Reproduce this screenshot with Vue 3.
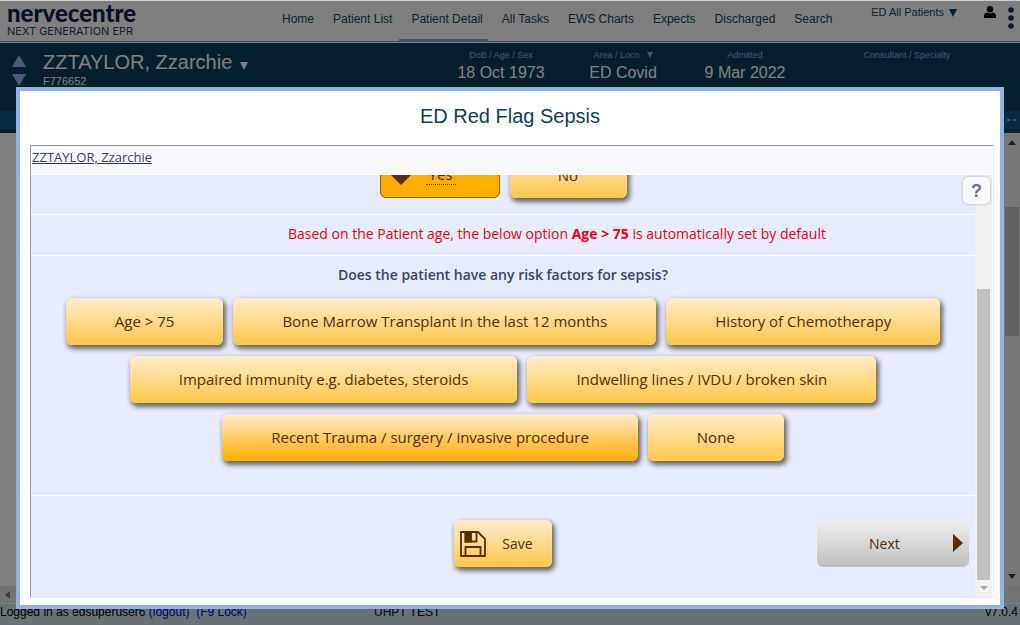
<script setup>
import { ref } from 'vue'

const navItems = ['Home', 'Patient List', 'Patient Detail', 'All Tasks', 'EWS Charts', 'Expects', 'Discharged', 'Search']
const current = 'Patient Detail'

const facts = [
  { label: 'DoB / Age / Sex', value: '18 Oct 1973' },
  { label: 'Area / Locn', value: 'ED Covid', menu: true },
  { label: 'Admitted', value: '9 Mar 2022' },
  { label: 'Consultant / Specialty', value: '' }
]

const riskRows = [
  ['Age > 75', 'Bone Marrow Transplant in the last 12 months', 'History of Chemotherapy'],
  ['Impaired immunity e.g. diabetes, steroids', 'Indwelling lines / IVDU / broken skin'],
  ['Recent Trauma / surgery / invasive procedure', 'None']
]
const highlighted = ref('Recent Trauma / surgery / invasive procedure')
</script>

<template>
  <div class="page">
    <header class="topbar">
      <div class="logo">
        <span class="logo-name">nervecentre</span>
        <span class="logo-tag">NEXT GENERATION EPR</span>
      </div>
      <nav class="nav">
        <a v-for="item in navItems" :key="item" href="#" :class="{ active: item === current }">{{ item }}</a>
      </nav>
      <div class="tools">
        <button class="list-picker" type="button">
          ED All Patients
          <svg width="8" height="8" viewBox="0 0 8 8"><path d="M0 0h8L4 8z" /></svg>
        </button>
        <button class="icon-btn user" type="button" aria-label="User">
          <svg width="12" height="12" viewBox="0 0 12 12"><circle cx="6" cy="3.2" r="3.2" /><path d="M0 12V9.8C0 7.8 1.6 6.8 3.2 6.6 4.8 7.9 7.2 7.9 8.8 6.6 10.4 6.8 12 7.8 12 9.8V12z" /></svg>
        </button>
        <button class="icon-btn dots" type="button" aria-label="More">
          <svg width="6" height="22" viewBox="0 0 6 22"><circle cx="3" cy="3" r="2.8" /><circle cx="3" cy="11" r="2.8" /><circle cx="3" cy="19" r="2.8" /></svg>
        </button>
      </div>
    </header>

    <section class="banner">
      <div class="stepper">
        <button type="button" aria-label="Previous patient"><svg width="14" height="12" viewBox="0 0 14 12"><path d="M7 0l7 12H0z" /></svg></button>
        <button type="button" aria-label="Next patient"><svg width="14" height="12" viewBox="0 0 14 12"><path d="M0 0h14L7 12z" /></svg></button>
      </div>
      <div class="who">
        <div class="name">ZZTAYLOR, Zzarchie <svg width="8" height="8" viewBox="0 0 8 8"><path d="M0 0h8L4 8z" /></svg></div>
        <div class="number">F776652</div>
      </div>
      <div v-for="fact in facts" :key="fact.label" class="fact">
        <div class="fact-label">{{ fact.label }} <svg v-if="fact.menu" width="6" height="6" viewBox="0 0 6 6"><path d="M0 0h6L3 6z" /></svg></div>
        <div class="fact-value">{{ fact.value }}</div>
      </div>
    </section>
    <div class="strip"><i></i><i></i></div>

    <main class="workspace">
      <div class="canvas"></div>
      <div class="page-scroll">
        <svg width="8" height="5" viewBox="0 0 8 5"><path d="M0 5l4-5 4 5z" /></svg>
        <div class="page-thumb"></div>
        <svg width="8" height="5" viewBox="0 0 8 5"><path d="M0 0h8L4 5z" /></svg>
      </div>
    </main>
    <div class="h-scroll"><svg width="5" height="8" viewBox="0 0 5 8"><path d="M5 0v8L0 4z" /></svg></div>
    <footer class="footer">
      <span class="login">Logged in as edsuperuser6 <a href="#">(logout)</a>&nbsp; <a href="#">(F9 Lock)</a></span>
      <span class="site">UHPT TEST</span>
      <span class="version">v7.0.4</span>
    </footer>

    <div class="shade"></div>

    <div class="dialog" role="dialog" aria-labelledby="dialog-title">
      <h1 id="dialog-title">ED Red Flag Sepsis</h1>
      <div class="frame">
        <div class="frame-head"><a href="#">ZZTAYLOR, Zzarchie</a></div>
        <div class="frame-body">
          <form class="form" @submit.prevent>
            <div class="row answers">
              <button class="choice chosen" type="button">
                <svg width="20" height="20" viewBox="0 0 20 20"><path d="M0 10L10 0l10 10-10 10z" /></svg>
                <span>Yes</span>
              </button>
              <button class="choice no" type="button">No</button>
            </div>
            <p class="notice">Based on the Patient age, the below option <b>Age &gt; 75</b> is automatically set by default</p>
            <fieldset class="risks">
              <legend>Does the patient have any risk factors for sepsis?</legend>
              <div v-for="(row, i) in riskRows" :key="i" class="row">
                <button v-for="label in row" :key="label" type="button" class="choice" :class="{ strong: label === highlighted }" @click="highlighted = label">{{ label }}</button>
              </div>
            </fieldset>
            <div class="actions">
              <button class="choice save" type="submit">
                <svg width="26" height="26" viewBox="0 0 26 26" fill="none" stroke="#572c07" stroke-width="1.8">
                  <path d="M1 1h17l7 7v17H1z" />
                  <path d="M5.5 25v-9h15v9" />
                  <path d="M5.5 1v9.5h11V1" />
                  <path d="M5.5 1h5.5v9.5H5.5z" fill="#572c07" />
                </svg>
                Save
              </button>
              <button class="next" type="button">
                <span>Next</span>
                <svg width="10" height="18" viewBox="0 0 10 18"><path d="M0 0l10 9-10 9z" fill="#572c07" /></svg>
              </button>
            </div>
          </form>
          <div class="form-scroll">
            <div class="form-thumb"></div>
            <svg width="8" height="4" viewBox="0 0 8 4"><path d="M0 0h8L4 4z" fill="#a3a3a3" /></svg>
          </div>
          <button class="help" type="button" aria-label="Help">?</button>
        </div>
      </div>
    </div>
  </div>
</template>

<style>
html, body, #app { height: 100%; }
body { background: #fff; overflow: hidden; }
</style>

<style scoped>
* { box-sizing: border-box; }
.page {
  position: relative;
  display: flex;
  flex-direction: column;
  height: 100vh;
  font-family: "Liberation Sans", Arial, sans-serif;
  font-size: 12px;
  overflow: hidden;
}
button { font: inherit; color: inherit; border: 0; background: none; padding: 0; }
svg { display: block; flex: none; }
a { text-decoration: none; }

.topbar {
  display: flex;
  height: 43px;
  flex: none;
  padding-bottom: 1px;
  background: #fff;
  color: #14465f;
  border-top: 1px solid #ccc;
}
.logo { width: 270px; padding: 0 0 0 7px; border-bottom: 1px solid #6f93b5; color: #15204e; }
.logo-name { display: block; font: 900 24px/24px Lato, sans-serif; }
.logo-tag { display: block; font: 11px/12px Inter, sans-serif; color: #343c60; }
.nav { display: flex; gap: 2px; border-bottom: 1px solid #6f93b5; flex: 1; }
.nav a { padding: 0 5px 0 12px; line-height: 36px; color: #14465f; border-bottom: 2px solid transparent; white-space: nowrap; }
.nav a.active { border-bottom-color: #8ea5d8; }
.tools { display: flex; align-items: flex-start; padding: 5px 6px 0 0; border-bottom: 1px solid #6f93b5; }
.list-picker { display: flex; align-items: center; gap: 5px; font-size: 11px; line-height: 13px; margin-right: 27px; }
.list-picker svg, .dots svg { fill: #0a3f62; }
.user { margin-right: 12px; }
.dots { padding-top: 1px; }

.banner {
  display: grid;
  grid-template-columns: 43px 1fr 122px 122px 122px 202px;
  flex: none;
  height: 68px;
  padding-right: 12px;
  background: #0c3e5a;
}
.stepper { display: flex; flex-direction: column; gap: 7px; padding: 12px 0 0 12px; }
.stepper svg { fill: #a0b4ec; }
.who { padding-top: 7px; color: #fff; }
.name { display: flex; align-items: center; gap: 8px; font-size: 20px; line-height: 24px; }
.name svg { fill: #fff; margin-top: 7px; }
.number { font-size: 11px; line-height: 14px; }
.fact { text-align: center; padding-top: 6px; }
.fact-label { display: flex; justify-content: center; align-items: center; gap: 7px; font-size: 9px; line-height: 12px; color: #9ab0f0; }
.fact-label svg { fill: #9ab0f0; }
.fact-value { font-size: 16px; line-height: 24px; color: #fff; }
.strip { display: flex; justify-content: flex-end; align-items: center; gap: 3px; flex: none; height: 22px; padding-right: 4px; background: #0f567f; border-bottom: 4px solid #0c3e5a; }
.strip i { width: 3px; height: 2px; background: #8fb4d8; }

.workspace { display: flex; flex: 1; min-height: 0; }
.canvas { flex: 1; background: #fff; }
.page-scroll { width: 16px; display: flex; flex-direction: column; align-items: center; padding: 7px 1px; background: #f1f1f1; }
.page-scroll svg { fill: #404040; }
.page-thumb { width: 14px; height: 129px; margin: 62px 0 auto; background: #c1c1c1; }
.h-scroll { display: flex; align-items: center; flex: none; height: 18px; padding-left: 5px; background: #e6e6e6; border-bottom: 1px solid #fff; }
.h-scroll svg { fill: #777; }
.footer { display: grid; grid-template-columns: 374px 1fr auto; flex: none; height: 21px; padding-right: 2px; line-height: 16px; background: #d2e7ee; color: #000; white-space: nowrap; }
.footer a { color: #0000cc; }

.shade { position: absolute; inset: 1px 0 0; background: rgba(0, 0, 0, 0.5); }

.dialog {
  position: absolute;
  inset: 87px 16px 16px;
  display: flex;
  flex-direction: column;
  padding: 0 6px 7px 10px;
  background: #fff;
  border: 4px solid #92b1e4;
}
h1 { margin: 0; font-size: 20px; font-weight: 400; line-height: 50px; text-align: center; color: #153c54; padding: 0 4px 4px 0; }
.frame { display: flex; flex-direction: column; flex: 1; min-height: 0; border: 1px solid #e9e9e9; border-top-color: #999; border-left-color: #999; padding-right: 1px; font-family: "Open Sans", "Noto Sans", sans-serif; }
.frame-head { flex: none; height: 29px; padding: 0 1px; font-size: 13px; line-height: 22px; background: #f8f9ff; border-bottom: 1px solid #fff; }
.frame-head a { color: #3a3c68; text-decoration: underline; }
.frame-body { position: relative; display: flex; flex: 1; min-height: 0; }
.form { display: flex; flex-direction: column; justify-content: flex-end; flex: 1; overflow: hidden; background: #e8ecff; font-size: 14px; }
.row { display: flex; justify-content: center; gap: 10px; margin-bottom: 11px; }
.choice {
  height: 47px;
  padding: 0 49px 2px;
  border-radius: 6px;
  color: #572c07;
  font-size: 15px;
  background: linear-gradient(#feeccb, #ffc748);
  box-shadow: 2px 3px 5px 1px #666;
  white-space: nowrap;
}
.choice.strong { background: linear-gradient(#feeccb, #ffad00); }
.answers { flex: none; margin: 0; padding-bottom: 16px; border-bottom: 1px solid #fff; }
.chosen { display: flex; align-items: center; gap: 15px; width: 120px; padding: 0 10px; background: #ffae00; border: 1px solid #8a6008; box-shadow: none; }
.chosen span { width: 30px; border-bottom: 1px dotted #572c07; }
.chosen svg { fill: #572c07; }
.no { width: 117px; padding: 0; }
.notice { flex: none; margin: 0; padding: 0 0 2px 108px; text-align: center; line-height: 38px; color: #e80014; border-bottom: 1px solid #fff; }
.risks { flex: none; height: 240px; margin: 0; padding: 0; border: 0; border-bottom: 1px solid #fff; min-width: 0; }
legend { width: 100%; padding: 0; text-align: center; font-weight: 600; font-size: 14px; line-height: 38px; margin-bottom: 4px; color: #3d3f70; }
.actions { display: grid; grid-template-columns: 1fr auto 1fr; flex: none; height: 101px; padding: 24px 6px 0; align-items: start; }
.save { grid-column: 2; display: flex; align-items: center; gap: 16px; padding: 0 19px 0 6px; font-size: 14px; }
.next { justify-self: end; display: flex; align-items: center; justify-content: space-between; width: 152px; height: 46px; margin-top: 1px; padding: 0 6px 2px 52px; color: #572c07; border-radius: 6px; background: linear-gradient(#ededed, #c0c0c0); }
.form-scroll { display: flex; flex-direction: column; align-items: center; width: 17px; padding-bottom: 7px; background: #f1f1f1; }
.form-thumb { width: 13px; flex: 1; margin: 114px 0 6px; background: #c1c1c1; }
.help { position: absolute; top: 2px; right: 2px; width: 27px; height: 27px; border-radius: 5px; background: #f8f9ff; box-shadow: 0 0 3px #aaa; color: #6b6ba0; font: bold 18px/26px "Liberation Sans", sans-serif; }
</style>
